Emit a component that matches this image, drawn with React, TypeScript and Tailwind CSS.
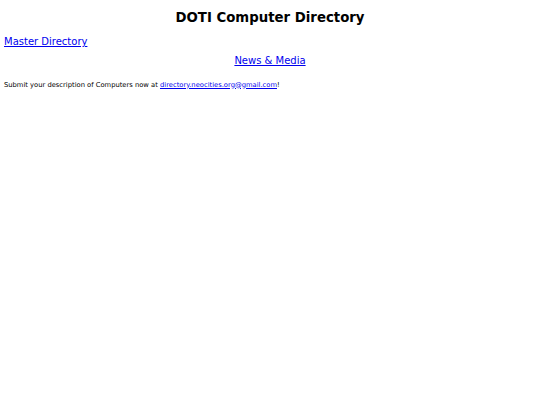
export default function App() {
  return (
    <div className="min-h-screen bg-white text-black" style={{ fontFamily: '"DejaVu Sans", Verdana, sans-serif' }}>
      <h1 className="pt-[10px] text-center text-[13.3px] font-bold leading-[16px]">DOTI Computer Directory</h1>
      <div className="mt-[8px] px-[4px] leading-[12px]">
        <a href="#" className="text-[10px] leading-[12px] text-[#0000ee] underline">Master Directory</a>
      </div>
      <div className="mt-[4.5px] text-center leading-[12px]">
        <a href="#" className="text-[10px] leading-[12px] text-[#0000ee] underline">News &amp; Media</a>
      </div>
      <p className="mt-[14px] px-[4px] text-[6.75px] leading-[8px]">
        Submit your description of Computers now at{' '}
        <a href="#" className="text-[#0000ee] underline">directory.neocities.org@gmail.com</a>!
      </p>
    </div>
  )
}
